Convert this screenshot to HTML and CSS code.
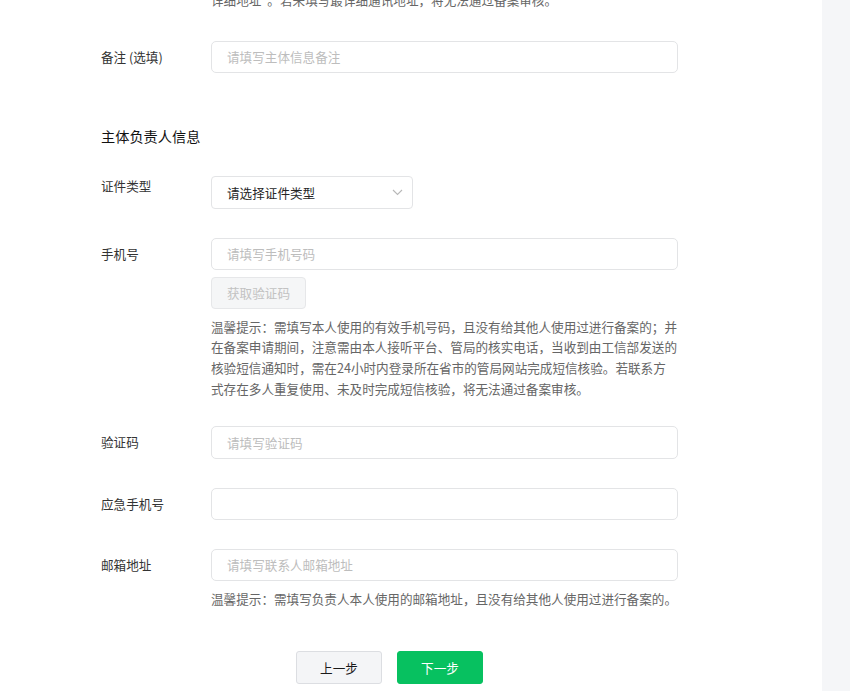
FILE: index.html
```html
<!DOCTYPE html>
<html lang="zh-CN">
<head>
<meta charset="utf-8">
<title>备案信息</title>
<link rel="stylesheet" href="styles.css">
</head>
<body>
<div class="layout">
  <main class="main">
    <div class="form">
      <p class="hint hint-top">详细地址"。若未填写最详细通讯地址，将无法通过备案审核。</p>

      <div class="row row-remark">
        <div class="label">备注 (选填)</div>
        <div class="field">
          <div class="input placeholder">请填写主体信息备注</div>
        </div>
      </div>

      <div class="section-title">主体负责人信息</div>

      <div class="row row-select">
        <div class="label">证件类型</div>
        <div class="field">
          <div class="select">
            <span>请选择证件类型</span>
            <svg class="chevron" width="11" height="7" viewBox="0 0 11 7"><polyline points="1,1 5.5,5.5 10,1" fill="none" stroke="#b8b8b8" stroke-width="1.1"/></svg>
          </div>
        </div>
      </div>

      <div class="row row-phone">
        <div class="label">手机号</div>
        <div class="field">
          <div class="input placeholder">请填写手机号码</div>
          <div class="code-btn">获取验证码</div>
          <p class="hint hint-phone">温馨提示：需填写本人使用的有效手机号码，且没有给其他人使用过进行备案的；并在备案申请期间，注意需由本人接听平台、管局的核实电话，当收到由工信部发送的核验短信通知时，需在24小时内登录所在省市的管局网站完成短信核验。若联系方式存在多人重复使用、未及时完成短信核验，将无法通过备案审核。</p>
        </div>
      </div>

      <div class="row row-code">
        <div class="label">验证码</div>
        <div class="field">
          <div class="input placeholder">请填写验证码</div>
        </div>
      </div>

      <div class="row row-emergency">
        <div class="label">应急手机号</div>
        <div class="field">
          <div class="input"></div>
        </div>
      </div>

      <div class="row row-email">
        <div class="label">邮箱地址</div>
        <div class="field">
          <div class="input placeholder">请填写联系人邮箱地址</div>
          <p class="hint hint-email">温馨提示：需填写负责人本人使用的邮箱地址，且没有给其他人使用过进行备案的。</p>
        </div>
      </div>

      <div class="actions">
        <button class="btn btn-prev">上一步</button>
        <button class="btn btn-next">下一步</button>
      </div>
    </div>
  </main>
  <aside class="side"></aside>
</div>
</body>
</html>
```
FILE: styles.css
```css
html, body {
  margin: 0;
  padding: 0;
  height: 691px;
  overflow: hidden;
  background: #ffffff;
}

body {
  font-family: "Noto Sans CJK SC", "Noto Sans", "Liberation Sans", sans-serif;
  font-size: 12.6px;
  color: #333333;
}

.layout {
  display: flex;
  height: 691px;
}

.main {
  width: 822px;
  flex: none;
  background: #ffffff;
}

.side {
  flex: 1;
  background: #f5f6f8;
}

.form {
  width: 577px;
  margin-left: 101px;
  display: flex;
  flex-direction: column;
}

.hint {
  margin: 0;
  font-size: 12.6px;
  line-height: 20.7px;
  color: #666666;
}

.hint-top {
  margin-left: 110px;
  margin-top: -10px;
}

.row {
  display: flex;
  align-items: flex-start;
}

.label {
  width: 110px;
  flex: none;
  line-height: 32px;
  color: #333333;
  white-space: nowrap;
}

.field {
  width: 467px;
  display: flex;
  flex-direction: column;
  align-items: flex-start;
}

.input {
  box-sizing: border-box;
  width: 467px;
  height: 32px;
  border: 1px solid #e3e4e6;
  border-radius: 5px;
  padding: 0 15px;
  line-height: 30px;
  color: #333333;
}

.input.placeholder {
  color: #bdbdbd;
}

.row-remark {
  margin-top: 30px;
}

.section-title {
  margin-top: 53px;
  font-size: 14.2px;
  line-height: 20px;
  color: #111111;
  font-weight: 400;
}

.row-select {
  margin-top: 24px;
}

.select {
  box-sizing: border-box;
  margin-top: 6px;
  width: 202px;
  height: 33px;
  border: 1px solid #e3e4e6;
  border-radius: 4px;
  padding: 0 9px 0 15px;
  display: flex;
  align-items: center;
  justify-content: space-between;
  color: #262626;
}

.chevron {
  display: block;
}

.row-phone {
  margin-top: 29px;
}

.code-btn {
  box-sizing: border-box;
  margin-top: 7px;
  height: 32px;
  padding: 0 15px;
  line-height: 30px;
  border: 1px solid #e6e7e9;
  border-radius: 4px;
  background: #f5f6f7;
  color: #c2c2c2;
}

.hint-phone {
  margin-top: 8px;
}

.row-code {
  margin-top: 26px;
}

.row-code .input {
  height: 33px;
  line-height: 31px;
}

.row-emergency {
  margin-top: 29px;
}

.row-email {
  margin-top: 29px;
}

.hint-email {
  margin-top: 8px;
}

.actions {
  margin-top: 42px;
  display: flex;
  justify-content: center;
  gap: 15px;
}

.btn {
  box-sizing: border-box;
  width: 86px;
  height: 33px;
  border-radius: 3px;
  font-family: inherit;
  font-size: 12.6px;
  padding: 0;
  cursor: pointer;
}

.btn-prev {
  background: #f4f5f7;
  border: 1px solid #dcdee2;
  color: #1a1a1a;
}

.btn-next {
  background: #07c160;
  border: 1px solid #07c160;
  color: #ffffff;
}
```
